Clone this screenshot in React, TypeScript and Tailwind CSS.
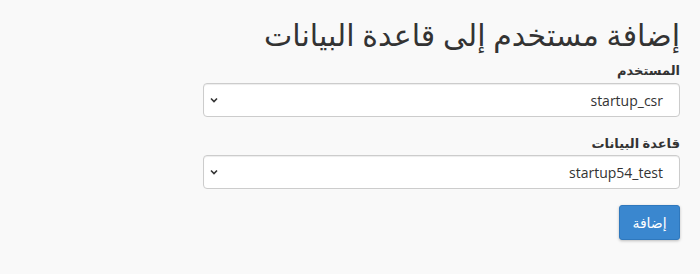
import React from "react";

function Select({ value }: { value: string }) {
  return (
    <div className="h-[34px] w-full rounded border border-[#cccccc] bg-white shadow-[inset_0_1px_1px_rgba(0,0,0,0.075)]">
      <div className="flex h-full items-center justify-between pl-[5px] pr-[16px]">
        <span className="text-[14px] text-[#333]">{value}</span>
        <svg width="10" height="10" viewBox="0 0 10 10" className="text-[#333]">
          <path d="M2 3.5 L5 6.5 L8 3.5" fill="none" stroke="currentColor" strokeWidth="1.6" />
        </svg>
      </div>
    </div>
  );
}

export default function App() {
  return (
    <div
      dir="rtl"
      className="h-[274px] w-[700px] bg-[#f9f9f9] pr-[20px] text-[#333]"
      style={{ fontFamily: '"Open Sans", "Noto Sans", "DejaVu Sans", sans-serif' }}
    >
      <div className="w-[477px]">
        <h1 className="pt-[14px] text-[30px] font-normal leading-[42px]">إضافة مستخدم إلى قاعدة البيانات</h1>
        <label className="mt-[4px] block text-[13px] font-bold leading-[20px]">المستخدم</label>
        <div className="mt-[3px]">
          <Select value="startup_csr" />
        </div>
        <label className="mt-[16px] block text-[13px] font-bold leading-[20px]">قاعدة البيانات</label>
        <div className="mt-[2px]">
          <Select value="startup54_test" />
        </div>
        <button className="mt-[16px] h-[35px] w-[61px] rounded-[3px] border border-[#2f78bd] bg-[#3a87cf] text-[14px] text-white shadow-[0_1px_3px_rgba(0,0,0,0.25)]">
          إضافة
        </button>
      </div>
    </div>
  );
}
